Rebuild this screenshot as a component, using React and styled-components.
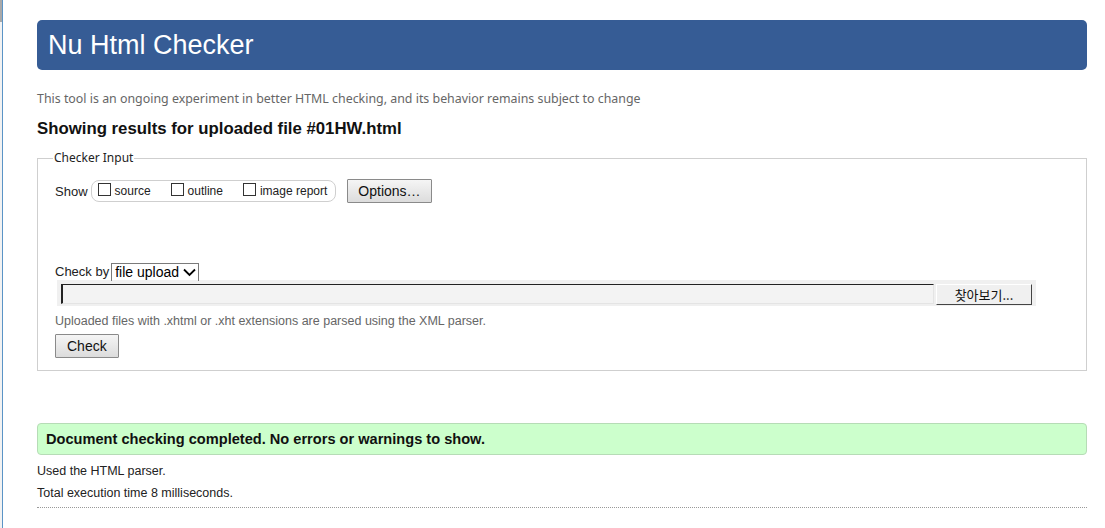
import React from 'react';
import styled, { createGlobalStyle } from 'styled-components';

const GlobalStyle = createGlobalStyle`
  html, body {
    margin: 0;
    padding: 0;
    background: #fff;
  }
  body {
    font-family: "Liberation Sans", Arial, sans-serif;
    color: #222;
  }
`;

const Page = styled.div`
  display: flex;
  min-height: 528px;
`;

const Edge = styled.div`
  width: 2px;
  flex-shrink: 0;
  background: linear-gradient(#a9a9a9 0 22px, #f2f2f2 22px);
  border-right: 1px solid #5b94c6;
`;

const Main = styled.main`
  width: 1050px;
  padding: 20px 0 0 34px;
`;

const Header = styled.h1`
  margin: 0;
  height: 50px;
  padding-left: 11px;
  border-radius: 5px;
  background: #365c95;
  color: #fff;
  font-size: 27px;
  font-weight: normal;
  line-height: 50px;
`;

const Notice = styled.p`
  margin: 20px 0 0;
  font-family: "Noto Sans", sans-serif;
  font-size: 12.4px;
  line-height: 18px;
  color: #666;
`;

const Title = styled.h2`
  margin: 11px 0 0;
  font-size: 16.8px;
  line-height: 20px;
  color: #111;
`;

const Fieldset = styled.fieldset`
  margin: 11px 0 0;
  padding: 13px 17px 12px;
  border: 1px solid #cfcfcf;
`;

const Legend = styled.legend`
  margin-left: -2px;
  padding: 0 1px;
  font-family: "Noto Sans", sans-serif;
  font-size: 12px;
  line-height: 16px;
  color: #222;
`;

const Row = styled.div`
  display: flex;
  align-items: center;
  font-size: 13px;
`;

const Pill = styled.div`
  display: flex;
  align-items: center;
  height: 20px;
  margin-left: 3px;
  padding: 0 8px 0 6px;
  border: 1px solid #cfcfcf;
  border-radius: 8px;
`;

const Option = styled.label`
  display: flex;
  align-items: center;
  margin-right: ${p => p.$gap || 0}px;
  font-size: 12px;
  color: #222;
`;

const Box = styled.input.attrs({ type: 'checkbox' })`
  appearance: none;
  width: 13px;
  height: 13px;
  margin: -3px 4px 0 0;
  border: 1px solid #333;
  background: #fff;
`;

const Button = styled.button`
  height: ${p => p.$h || 24}px;
  margin: ${p => p.$mt || 0}px 0 0 ${p => p.$ml || 0}px;
  padding: 0 ${p => p.$px || 10}px;
  border: 1px solid #8a8a8a;
  border-radius: 1px;
  background: linear-gradient(#f5f5f5, #dcdcdc);
  font-family: "Liberation Sans", Arial, sans-serif;
  font-size: ${p => p.$fs || 14}px;
  color: #111;
`;

const CheckBy = styled(Row)`
  margin-top: 60px;
  height: 17px;
`;

const Select = styled.div`
  display: flex;
  align-items: center;
  gap: 4px;
  height: 17px;
  margin-left: 2px;
  padding: 0 2px 0 3px;
  border: 1px solid #7a7a7a;
  border-bottom: none;
  font-size: 14px;
  color: #000;
`;

const FileRow = styled.div`
  display: flex;
  align-items: center;
  width: 971px;
  height: 25px;
  margin-left: 2px;
  padding: 1px 4px 0;
  background: #f0f0f0;
`;

const FileField = styled.div`
  flex: 1;
  height: 18px;
  border-top: 1px solid #222;
  border-left: 2px solid #222;
  border-right: 1px solid #e4e4e4;
  border-bottom: 1px solid #e4e4e4;
  background: #f3f3f3;
`;

const Browse = styled.div`
  width: 94px;
  height: 19px;
  margin: 2px 0 0 2px;
  border-top: 1px solid #fff;
  border-left: 1px solid #fff;
  border-right: 1px solid #444;
  border-bottom: 1px solid #444;
  background: #f0f0f0;
  font-family: "Noto Sans CJK KR", sans-serif;
  font-size: 13px;
  line-height: 19px;
  text-align: center;
  color: #111;
`;

const Hint = styled.p`
  margin: 7px 0 0;
  font-size: 12.5px;
  line-height: 16px;
  color: #666;
`;

const Success = styled.div`
  margin-top: 52px;
  height: 30px;
  padding-left: 8px;
  border: 1px solid #b6dcb6;
  border-radius: 4px;
  background: #ccffcc;
  font-size: 14.6px;
  font-weight: bold;
  line-height: 30px;
  color: #111;
`;

const Detail = styled.p`
  margin: ${p => p.$mt || 0}px 0 0;
  font-size: 12.5px;
  line-height: 22px;
  color: #222;
`;

const Rule = styled.hr`
  margin: 3px 0 0;
  border: none;
  border-top: 1px dotted #999;
`;

const Chevron = () => (
  <svg width="13" height="9" viewBox="0 0 13 9">
    <path d="M1 1.5 L6.5 7 L12 1.5" fill="none" stroke="#000" strokeWidth="1.8" />
  </svg>
);

const App = () => {
  return (
    <Page>
      <GlobalStyle />
      <Edge />
      <Main>
        <Header>Nu Html Checker</Header>
        <Notice>This tool is an ongoing experiment in better HTML checking, and its behavior remains subject to change</Notice>
        <Title>Showing results for uploaded file #01HW.html</Title>
        <Fieldset>
          <Legend>Checker Input</Legend>
          <Row>
            Show
            <Pill>
              <Option $gap={20}><Box />source</Option>
              <Option $gap={20}><Box />outline</Option>
              <Option><Box />image report</Option>
            </Pill>
            <Button $ml={11} $h={24} $px={10} $fs={14}>Options…</Button>
          </Row>
          <CheckBy>
            Check by
            <Select>file upload<Chevron /></Select>
          </CheckBy>
          <FileRow>
            <FileField />
            <Browse>찾아보기...</Browse>
          </FileRow>
          <Hint>Uploaded files with .xhtml or .xht extensions are parsed using the XML parser.</Hint>
          <Button $h={24} $px={11} $mt={5}>Check</Button>
        </Fieldset>
        <Success>Document checking completed. No errors or warnings to show.</Success>
        <Detail $mt={5}>Used the HTML parser.</Detail>
        <Detail>Total execution time 8 milliseconds.</Detail>
        <Rule />
      </Main>
    </Page>
  );
};

export default App;
